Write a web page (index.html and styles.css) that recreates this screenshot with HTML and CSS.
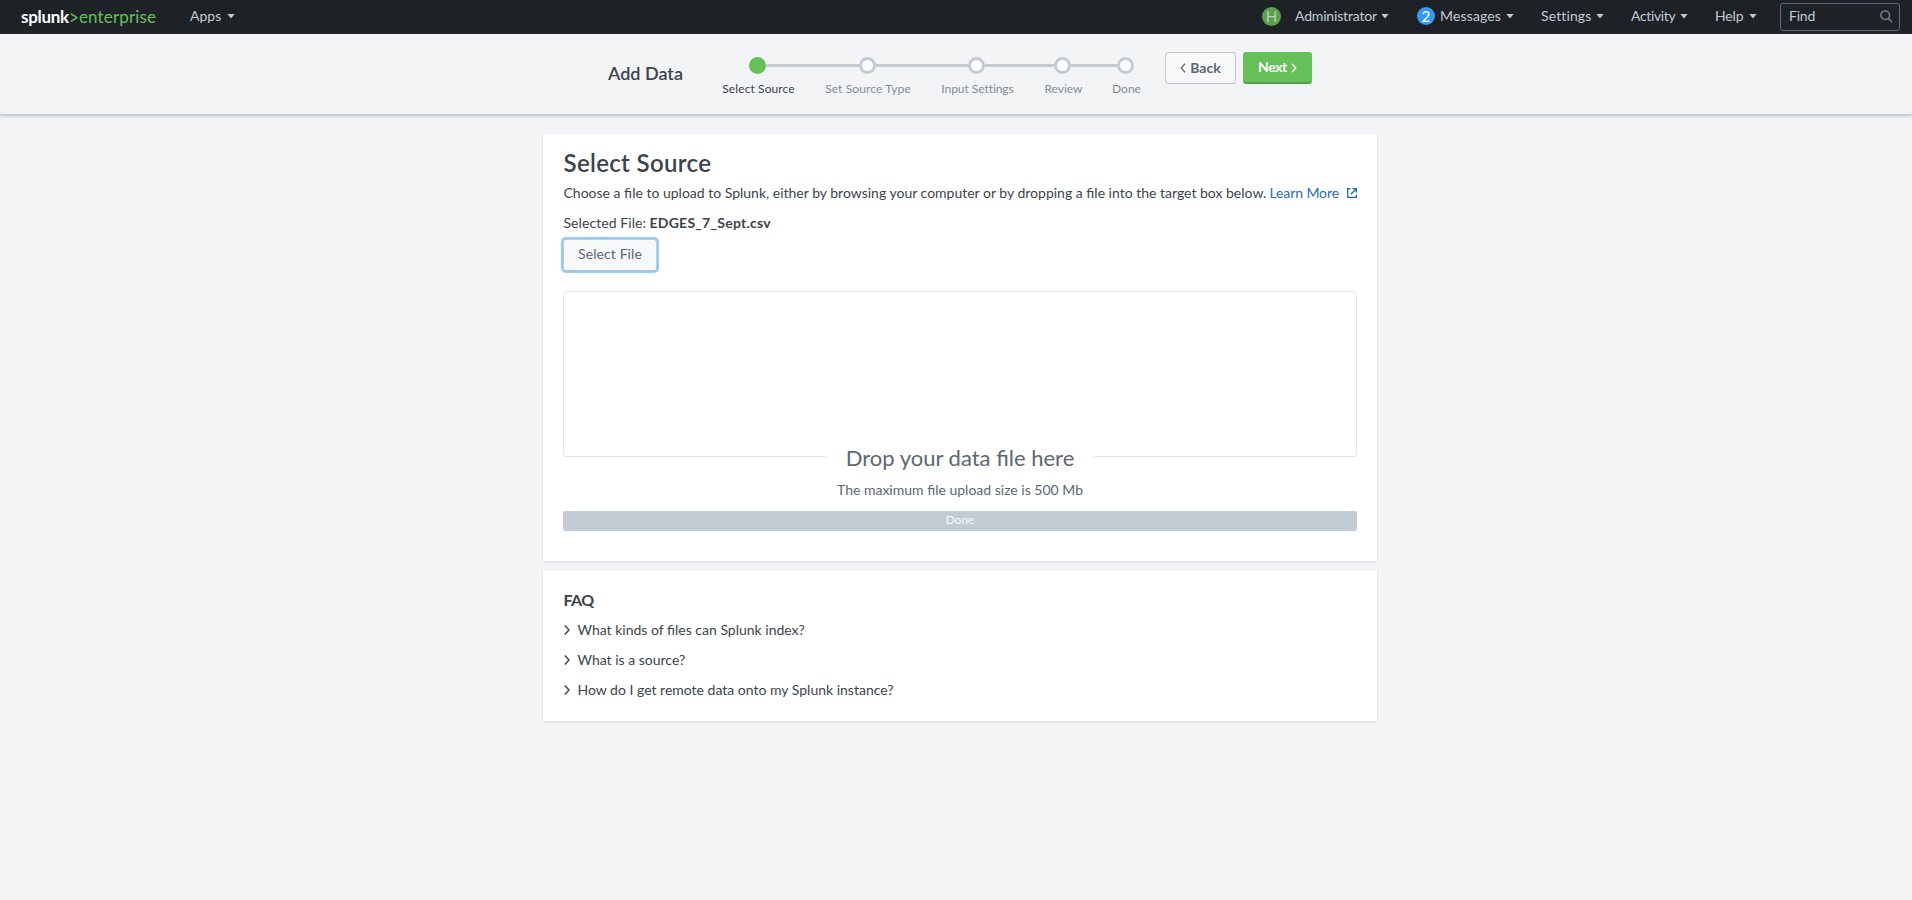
FILE: index.html
```html
<!DOCTYPE html>
<html lang="en">
<head>
<meta charset="utf-8">
<title>Add Data - Select Source | Splunk</title>
<link rel="stylesheet" href="styles.css">
</head>
<body>
<header class="navbar">
  <a class="logo"><span class="logo-name">splunk</span><svg class="logo-mark" viewBox="0 0 8 11"><path d="M.9 1v1.700L5.800 5.600.9 8.500v1.700L7.500 6.300V5z"/></svg><span class="logo-product">enterprise</span></a>
  <a class="nav-item apps"><span>Apps</span><i class="caret"></i></a>
  <nav class="nav-right">
    <span class="avatar">H</span>
    <a class="nav-item admin"><span>Administrator</span><i class="caret"></i></a>
    <a class="nav-item messages"><b class="count">2</b><span>Messages</span><i class="caret"></i></a>
    <a class="nav-item settings"><span>Settings</span><i class="caret"></i></a>
    <a class="nav-item activity"><span>Activity</span><i class="caret"></i></a>
    <a class="nav-item help"><span>Help</span><i class="caret"></i></a>
    <div class="find"><span>Find</span><svg viewBox="0 0 13 13"><circle cx="5.200" cy="5.200" r="4.300"/><path d="M8.300 8.300l3.800 3.800"/></svg></div>
  </nav>
</header>

<section class="wizard-bar">
  <h1>Add Data</h1>
  <ol class="steps">
    <li class="step s1 active"><i class="dot"></i><span>Select Source</span></li>
    <li class="step s2"><i class="dot"></i><span>Set Source Type</span></li>
    <li class="step s3"><i class="dot"></i><span>Input Settings</span></li>
    <li class="step s4"><i class="dot"></i><span>Review</span></li>
    <li class="step s5"><i class="dot"></i><span>Done</span></li>
  </ol>
  <div class="wizard-buttons">
    <button class="btn back"><svg viewBox="0 0 6 10"><path d="M5 .8L1.200 5 5 9.200"/></svg><span>Back</span></button>
    <button class="btn next"><span>Next</span><svg viewBox="0 0 6 10"><path d="M1 .8L4.800 5 1 9.200"/></svg></button>
  </div>
</section>

<main>
  <section class="panel source">
    <h2>Select Source</h2>
    <p class="intro"><span>Choose a file to upload to Splunk, either by browsing your computer or by dropping a file into the target box below.</span><a>Learn More</a><svg viewBox="0 0 10 10"><path d="M3.500.7H.7v8.600h8.600V6.500M5.500.7h3.800v3.800M9.300.7L3.800 6.200"/></svg></p>
    <p class="selected"><span>Selected File:</span><strong>EDGES_7_Sept.csv</strong></p>
    <button class="btn select-file"><span>Select File</span></button>
    <div class="dropzone"></div>
    <div class="drop-text">Drop your data file here</div>
    <p class="max-size">The maximum file upload size is 500 Mb</p>
    <div class="progress">Done</div>
  </section>
  <section class="panel faq">
    <h3>FAQ</h3>
    <ul>
      <li><svg viewBox="0 0 6 10"><path d="M.8 .5L5 5 .8 9.500"/></svg><span>What kinds of files can Splunk index?</span></li>
      <li><svg viewBox="0 0 6 10"><path d="M.8 .5L5 5 .8 9.500"/></svg><span>What is a source?</span></li>
      <li><svg viewBox="0 0 6 10"><path d="M.8 .5L5 5 .8 9.500"/></svg><span>How do I get remote data onto my Splunk instance?</span></li>
    </ul>
  </section>
</main>
</body>
</html>
```
FILE: styles.css
```css
* { box-sizing: border-box; }
body {
  margin: 0;
  min-height: 900px;
  background: #f2f4f5;
  color: #3c444d;
  font: 14px/20px Lato, "Liberation Sans", sans-serif;
}
h1, h2, h3, p, ul, ol { margin: 0; padding: 0; list-style: none; }
svg { display: block; fill: none; stroke: currentColor; flex: none; }
button { font: inherit; }

/* Top navigation */
.navbar {
  display: flex;
  align-items: center;
  height: 34px;
  padding: 0 12px 0 21px;
  background: #1e2226;
  border-bottom: 1px solid #2c2230;
  color: #c3cbd4;
  white-space: nowrap;
}
.logo { display: flex; align-items: center; width: 169px; font-size: 17px; }
.logo-name { width: 49px; color: #fff; font-weight: 700; letter-spacing: -.3px; }
.logo-mark { width: 8px; height: 11px; margin: 1px 1px 0 0; fill: #65c05a; stroke: none; }
.logo-product { color: #65c05a; letter-spacing: .14px; }
.nav-item { display: flex; align-items: center; flex: none; }
.nav-item span, .find span { padding-bottom: 1px; }
.caret {
  width: 8px;
  height: 5px;
  margin: 0 0 1px auto;
  background: #c3cbd4;
  clip-path: polygon(0 0, 100% 0, 50% 100%);
}
.apps { width: 45px; }
.nav-right { display: flex; align-items: center; margin-left: auto; }
.avatar, .count {
  display: grid;
  place-items: center;
  width: 18px;
  height: 18px;
  margin-bottom: 1px;
  border-radius: 50%;
  background: #5aa04d;
  color: #b9d3b8;
  font-size: 15px;
  font-weight: 400;
  line-height: 18px;
}
.avatar { width: 19px; height: 19px; margin-right: 14px; }
.count { margin-right: 5px; background: #3898fa; color: #fff; }
.admin { width: 94px; margin-right: 28px; letter-spacing: -.17px; }
.messages { width: 97px; margin-right: 27px; letter-spacing: .15px; }
.settings { width: 63px; margin-right: 27px; letter-spacing: .12px; }
.activity { width: 57px; margin-right: 27px; letter-spacing: -.35px; }
.help { width: 42px; margin-right: 23px; letter-spacing: -.13px; }
.find {
  display: flex;
  align-items: center;
  justify-content: space-between;
  width: 120px;
  height: 28px;
  padding: 0 6px 0 8px;
  border: 1px solid #5c6773;
  border-radius: 3px;
  letter-spacing: -.2px;
}
.find svg { width: 13px; height: 13px; margin-bottom: 1px; stroke: #6b7785; stroke-width: 1.700; }

/* Wizard header */
.wizard-bar {
  display: flex;
  align-items: flex-start;
  height: 81px;
  padding-left: 608px;
  border-bottom: 1px solid #c3cbd4;
  box-shadow: 0 1px 3px rgba(60, 68, 77, .3);
}
h1 { width: 114px; padding-top: 29px; font-size: 18px; font-weight: 600; line-height: 20px; }
.steps { display: flex; padding-top: 23px; width: 443px; }
.step {
  display: flex;
  flex-direction: column;
  align-items: center;
  flex: none;
  color: #818d99;
  font-size: 12px;
  line-height: 16px;
  white-space: nowrap;
}
.dot {
  display: flex;
  align-items: center;
  width: 17px;
  height: 17px;
  margin: 0 2px 7px 0;
  border: 3px solid #c3cbd4;
  border-radius: 50%;
  background: #fff;
}
.dot::after { content: ""; flex: none; height: 3px; margin-left: 14px; background: #c3cbd4; }
.s1 { width: 73px; margin-right: 30px; letter-spacing: .1px; }
.s2 { width: 86px; margin-right: 30px; letter-spacing: .1px; }
.s3 { width: 73px; margin-right: 30px; letter-spacing: -.05px; }
.s4 { width: 39px; margin-right: 29px; }
.s5 { width: 29px; }
.s1 .dot { margin-right: 3px; }
.s1 .dot::after { width: 94px; }
.s2 .dot::after { width: 94px; }
.s3 .dot::after { width: 70px; }
.s4 .dot::after { width: 47px; }
.s5 .dot::after { display: none; }
.active { color: #3c444d; }
.active .dot { border-color: #65c05a; background: #65c05a; }
.wizard-buttons { display: flex; gap: 7px; padding-top: 18px; }
.btn {
  display: flex;
  align-items: center;
  justify-content: center;
  height: 32px;
  padding: 0;
  border: 1px solid #c3cbd4;
  border-bottom-color: #b9c2cc;
  border-radius: 3px;
  background: #f7f8fa;
  color: #5c6773;
}
.btn span { padding-bottom: 1px; }
.btn svg { width: 6px; height: 10px; stroke-width: 1.300; }
.back, .next { gap: 4px; font-weight: 700; }
.back { width: 71px; }
.next { width: 69px; border-color: #65c05a; border-bottom: 2px solid #53a051; background: #65c05a; color: #fff; letter-spacing: -.4px; }

/* Content */
main { display: flex; flex-direction: column; gap: 10px; width: 834px; margin: 19px 0 0 543px; }
.panel { padding: 0 20px; background: #fff; box-shadow: 0 1px 2px rgba(60, 68, 77, .14); }
.source { height: 427px; padding: 15px 20px 0; }
h2 { padding-left: .5px; font-size: 24px; font-weight: 600; line-height: 28px; letter-spacing: .35px; }
.intro { display: flex; align-items: center; padding: 6px 0 0 .5px; white-space: nowrap; }
.intro span { width: 706px; }
.intro a, .intro svg { color: #1e6fb0; }
.intro a { width: 77px; letter-spacing: -.1px; }
.intro svg { width: 10px; height: 10px; stroke-width: 1.300; }
.selected { display: flex; padding: 10px 0 0 .5px; }
.selected span { width: 86px; letter-spacing: .07px; }
.selected strong { letter-spacing: .25px; }
.select-file { width: 94px; margin-top: 6px; box-shadow: 0 0 1px 2px #8ccbfd; letter-spacing: .1px; }
.select-file span { padding-bottom: 2px; }
.dropzone { height: 166px; margin-top: 20px; border: 1px solid #e1e6eb; border-radius: 3px; }
.drop-text {
  width: 268px;
  margin: -14px auto 0;
  position: relative;
  background: #fff;
  color: #5c6773;
  font-size: 22px;
  line-height: 29px;
  text-align: center;
}
.max-size { margin-top: 8px; color: #5c6773; text-align: center; }
.progress { height: 20px; margin-top: 11px; border-radius: 2px; background: #c3cbd4; color: #f7f8fa; font-size: 12px; line-height: 18px; text-align: center; }
.faq { height: 150px; padding-top: 19px; }
h3 { padding-left: .5px; font-size: 16px; font-weight: 700; line-height: 20px; letter-spacing: -.5px; }
.faq ul { display: grid; gap: 10px; padding-top: 10px; }
.faq li { display: flex; align-items: center; gap: 8px; padding-left: .5px; }
.faq svg { width: 6px; height: 10px; stroke-width: 1.400; }
```
